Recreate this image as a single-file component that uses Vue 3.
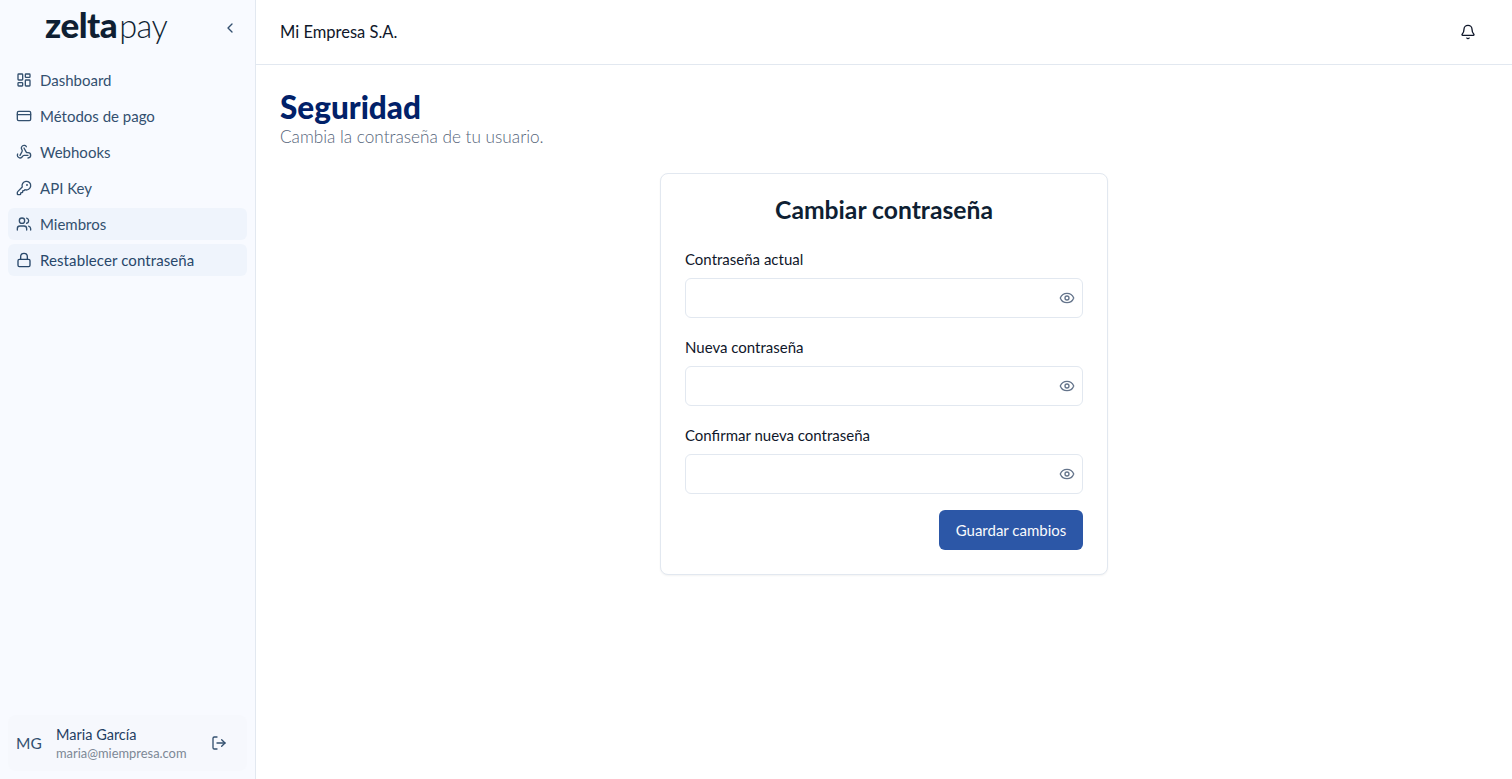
<script setup>
const navItems = [
  { label: 'Dashboard', icon: 'dashboard' },
  { label: 'Métodos de pago', icon: 'card' },
  { label: 'Webhooks', icon: 'webhook' },
  { label: 'API Key', icon: 'key' },
  { label: 'Miembros', icon: 'users', active: true },
  { label: 'Restablecer contraseña', icon: 'lock', active: true, strong: true }
]

const fields = ['Contraseña actual', 'Nueva contraseña', 'Confirmar nueva contraseña']
</script>

<template>
  <div class="layout">
    <aside class="sidebar">
      <div class="brand">
        <div class="logo"><span class="logo-bold">zelta</span><span class="logo-light">pay</span></div>
        <svg class="collapse" viewBox="0 0 24 24" width="16" height="16" fill="none" stroke="currentColor" stroke-width="2" stroke-linecap="round" stroke-linejoin="round">
          <path d="m15 18-6-6 6-6" />
        </svg>
      </div>

      <nav class="nav">
        <a v-for="item in navItems" :key="item.label" class="nav-item" :class="{ active: item.active, strong: item.strong }">
          <svg viewBox="0 0 24 24" width="16" height="16" fill="none" stroke="currentColor" stroke-width="2" stroke-linecap="round" stroke-linejoin="round">
            <template v-if="item.icon === 'dashboard'">
              <rect width="7" height="9" x="3" y="3" rx="1" />
              <rect width="7" height="5" x="14" y="3" rx="1" />
              <rect width="7" height="9" x="14" y="12" rx="1" />
              <rect width="7" height="5" x="3" y="16" rx="1" />
            </template>
            <template v-else-if="item.icon === 'card'">
              <rect width="20" height="14" x="2" y="5" rx="2" />
              <line x1="2" x2="22" y1="10" y2="10" />
            </template>
            <template v-else-if="item.icon === 'webhook'">
              <path d="M18 16.98h-5.99c-1.1 0-1.95.94-2.48 1.9A4 4 0 0 1 2 17c.01-.7.2-1.4.57-2" />
              <path d="m6 17 3.13-5.78c.53-.97.1-2.18-.5-3.1a4 4 0 1 1 6.89-4.06" />
              <path d="m12 6 3.13 5.73C15.66 12.7 16.9 13 18 13a4 4 0 0 1 0 8" />
            </template>
            <template v-else-if="item.icon === 'key'">
              <path d="M2.586 17.414A2 2 0 0 0 2 18.828V21a1 1 0 0 0 1 1h3a1 1 0 0 0 1-1v-1a1 1 0 0 1 1-1h1a1 1 0 0 0 1-1v-1a1 1 0 0 1 1-1h.172a2 2 0 0 0 1.414-.586l.814-.814a6.5 6.5 0 1 0-4-4z" />
              <circle cx="16.5" cy="7.5" r=".5" fill="currentColor" />
            </template>
            <template v-else-if="item.icon === 'users'">
              <path d="M16 21v-2a4 4 0 0 0-4-4H6a4 4 0 0 0-4 4v2" />
              <circle cx="9" cy="7" r="4" />
              <path d="M22 21v-2a4 4 0 0 0-3-3.87" />
              <path d="M16 3.13a4 4 0 0 1 0 7.75" />
            </template>
            <template v-else>
              <rect width="18" height="11" x="3" y="11" rx="2" ry="2" />
              <path d="M7 11V7a5 5 0 0 1 10 0v4" />
            </template>
          </svg>
          <span>{{ item.label }}</span>
        </a>
      </nav>

      <div class="user">
        <span class="avatar">MG</span>
        <div class="user-info">
          <span class="user-name">Maria García</span>
          <span class="user-mail">maria@miempresa.com</span>
        </div>
        <svg viewBox="0 0 24 24" width="16" height="16" fill="none" stroke="currentColor" stroke-width="2" stroke-linecap="round" stroke-linejoin="round">
          <path d="M9 21H5a2 2 0 0 1-2-2V5a2 2 0 0 1 2-2h4" />
          <polyline points="16 17 21 12 16 7" />
          <line x1="21" x2="9" y1="12" y2="12" />
        </svg>
      </div>
    </aside>

    <div class="content">
      <header class="topbar">
        <span class="company">Mi Empresa S.A.</span>
        <svg viewBox="0 0 24 24" width="16" height="16" fill="none" stroke="currentColor" stroke-width="2" stroke-linecap="round" stroke-linejoin="round">
          <path d="M10.268 21a2 2 0 0 0 3.464 0" />
          <path d="M3.262 15.326A1 1 0 0 0 4 17h16a1 1 0 0 0 .74-1.673C19.41 13.956 18 12.499 18 8A6 6 0 0 0 6 8c0 4.499-1.411 5.956-2.738 7.326" />
        </svg>
      </header>

      <main class="main">
        <h1>Seguridad</h1>
        <p class="subtitle">Cambia la contraseña de tu usuario.</p>

        <form class="card" @submit.prevent>
          <h2>Cambiar contraseña</h2>
          <div v-for="field in fields" :key="field" class="field">
            <label>{{ field }}</label>
            <div class="input-wrap">
              <input type="password" />
              <svg class="eye" viewBox="0 0 24 24" width="16" height="16" fill="none" stroke="currentColor" stroke-width="2" stroke-linecap="round" stroke-linejoin="round">
                <path d="M2.062 12.348a1 1 0 0 1 0-.696 10.75 10.75 0 0 1 19.876 0 1 1 0 0 1 0 .696 10.75 10.75 0 0 1-19.876 0" />
                <circle cx="12" cy="12" r="3" />
              </svg>
            </div>
          </div>
          <div class="actions">
            <button type="submit">Guardar cambios</button>
          </div>
        </form>
      </main>
    </div>
  </div>
</template>

<style>
html, body {
  margin: 0;
  background: #fff;
}
</style>

<style scoped>
.layout {
  display: flex;
  height: 779px;
  overflow: hidden;
  font-family: "Lato", "Open Sans", sans-serif;
  color: #0f172a;
}

.sidebar {
  width: 255px;
  flex-shrink: 0;
  display: flex;
  flex-direction: column;
  background: #f8faff;
  border-right: 1px solid #e2e8f0;
}

.brand {
  position: relative;
  height: 64px;
  padding-left: 45px;
  color: #0f1f33;
}

.logo {
  padding-top: 2px;
  line-height: 44px;
  white-space: nowrap;
}

.logo-bold {
  font-size: 35px;
  font-weight: 900;
  letter-spacing: -0.5px;
  margin-right: 2px;
}

.logo-light {
  font-size: 32.5px;
  font-weight: 300;
  letter-spacing: -0.5px;
}

.collapse {
  position: absolute;
  top: 20px;
  right: 17px;
  color: #33506f;
}

.nav {
  display: flex;
  flex-direction: column;
  gap: 4px;
  padding: 0 8px;
}

.nav-item {
  display: flex;
  align-items: center;
  gap: 8px;
  height: 32px;
  padding: 0 8px;
  border-radius: 6px;
  font-size: 15px;
  color: #33506f;
}

.nav-item.active {
  background: #eff4fc;
}

.nav-item.strong {
  color: #28476a;
  letter-spacing: 0.1px;
}

.user {
  margin: auto 8px 8px;
  height: 56px;
  display: flex;
  align-items: center;
  padding: 0 20px 0 8px;
  border-radius: 8px;
  background: #f6f8fd;
  color: #33506f;
}

.avatar {
  width: 40px;
  font-size: 15.5px;
}

.user-info {
  flex: 1;
  display: flex;
  flex-direction: column;
}

.user-name {
  font-size: 14.5px;
  line-height: 20px;
  color: #1f3f63;
}

.user-mail {
  font-size: 12.9px;
  line-height: 16px;
  color: #7d8896;
}

.content {
  flex: 1;
  min-width: 0;
  background: #fff;
}

.topbar {
  height: 64px;
  display: flex;
  align-items: center;
  justify-content: space-between;
  padding: 0 36px 0 24px;
  border-bottom: 1px solid #e2e8f0;
}

.company {
  font-size: 16.5px;
  line-height: 22px;
}

.main {
  padding: 24px;
}

h1 {
  margin: 0;
  font-size: 31.5px;
  line-height: 36px;
  font-weight: 900;
  color: #012169;
}

.subtitle {
  margin: 0;
  font-size: 17.2px;
  font-weight: 300;
  line-height: 24px;
  color: #56657a;
}

.card {
  box-sizing: border-box;
  width: 448px;
  margin: 24px auto 0;
  padding: 24px;
  background: #fff;
  border: 1px solid #e2e8f0;
  border-radius: 8px;
  box-shadow: 0 1px 2px rgba(0, 0, 0, 0.05);
}

h2 {
  margin: 0 0 28px;
  text-align: center;
  font-size: 24.7px;
  line-height: 24px;
  font-weight: 700;
  color: #0f1f33;
}

.field + .field {
  margin-top: 20px;
}

label {
  display: block;
  margin-bottom: 10px;
  font-size: 15px;
  line-height: 18px;
  color: #0f172a;
}

.input-wrap {
  position: relative;
}

input {
  display: block;
  box-sizing: border-box;
  width: 100%;
  height: 40px;
  border: 1px solid #e2e8f0;
  border-radius: 6px;
  background: #fff;
  outline: none;
}

.eye {
  position: absolute;
  top: 12px;
  right: 8px;
  color: #64748b;
}

.actions {
  display: flex;
  justify-content: flex-end;
  margin-top: 16px;
}

button {
  height: 40px;
  width: 144px;
  border: 0;
  border-radius: 6px;
  background: #2c57a7;
  color: #f8fafc;
  font: 400 15px "Lato", sans-serif;
}
</style>
